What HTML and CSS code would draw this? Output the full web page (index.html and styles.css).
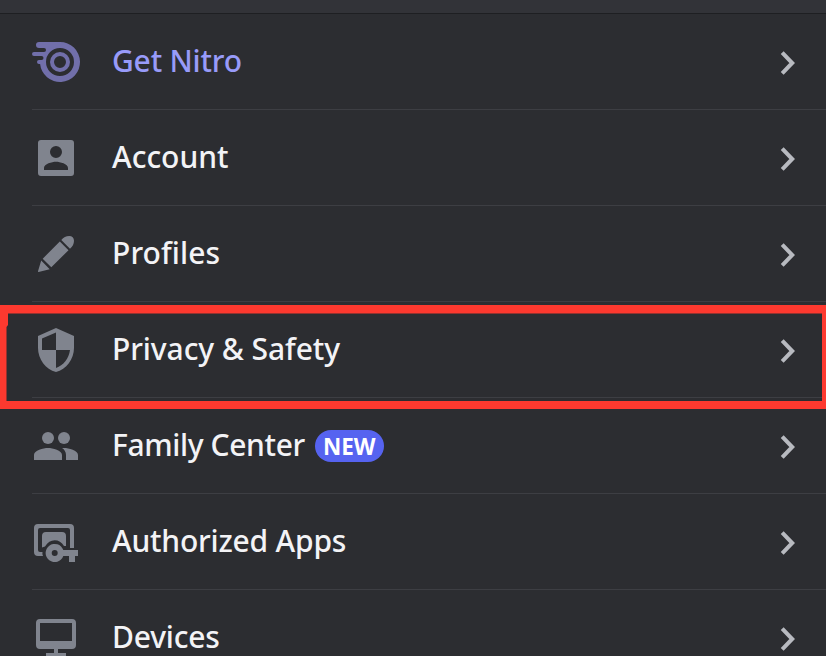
FILE: index.html
```html
<!DOCTYPE html>
<html lang="en">
<head>
<meta charset="utf-8">
<title>User Settings</title>
<link rel="stylesheet" href="styles.css">
</head>
<body>
<svg class="defs" width="0" height="0" aria-hidden="true">
  <symbol id="chevron" viewBox="0 0 20 28"><path d="M4.200 3.700 14.200 14 4.200 24.300" fill="none" stroke="currentColor" stroke-width="4"/></symbol>
</svg>
<div class="top-strip"></div>
<main class="settings">
  <a class="row nitro">
    <svg class="icon" viewBox="0 0 48 48"><path fill-rule="evenodd" d="M7 4H28A20 20 0 1 1 8.100 26H7a2 2 0 0 1 0-4H9.500A2 2 0 0 0 9.500 18H2a2 2 0 0 1 0-4H12a2 2 0 0 0 0-4H7a3 3 0 0 1 0-6ZM28 10a14 14 0 1 0 0 28a14 14 0 1 0 0-28Z"/><circle cx="28" cy="24" r="8" fill="none" stroke="currentColor" stroke-width="4"/></svg>
    <span class="label get-nitro">Get Nitro</span>
    <svg class="chevron"><use href="#chevron"/></svg>
  </a>
  <a class="row">
    <svg class="icon" viewBox="0 0 24 24"><path fill-rule="evenodd" d="M4.500 3h15A1.500 1.500 0 0 1 21 4.500v15a1.500 1.500 0 0 1-1.500 1.500h-15A1.500 1.500 0 0 1 3 19.500v-15A1.500 1.500 0 0 1 4.500 3ZM12 6a3 3 0 1 0 0 6a3 3 0 1 0 0-6ZM6 18h12v-1c0-2-4-3.100-6-3.100S6 15 6 17Z"/></svg>
    <span class="label account">Account</span>
    <svg class="chevron"><use href="#chevron"/></svg>
  </a>
  <a class="row">
    <svg class="icon" viewBox="0 0 48 48"><path d="M27.800 11.500 36.500 20.200 19.300 37.300 10.700 28.700ZM29.300 10C31.500 7.500 34 6 37.300 6c2.700 0 4.700 2 4.700 4.700 0 3.300-1.500 5.800-4 8ZM9.200 30.500 17.700 39.300 6.600 42Q5.800 42 6 41.300Z"/></svg>
    <span class="label profiles">Profiles</span>
    <svg class="chevron"><use href="#chevron"/></svg>
  </a>
  <a class="row selected">
    <svg class="icon" viewBox="0 0 24 24"><path fill-rule="evenodd" d="M12 1 3 5v6c0 5.550 3.840 10.740 9 12 5.160-1.260 9-6.450 9-12V5ZM12 12h7c-.53 4.120-3.280 7.790-7 8.940V12H5V6.300l7-3.110Z"/></svg>
    <span class="label privacy">Privacy &amp; Safety</span>
    <svg class="chevron"><use href="#chevron"/></svg>
    <svg class="highlight" viewBox="0 0 826 104"><path fill-rule="evenodd" d="M0 0H826V104H0ZM8 8.500V20L6.500 22V96H822V8.500Z"/></svg>
  </a>
  <a class="row">
    <svg class="icon" viewBox="0 0 24 24"><circle cx="8" cy="8" r="3"/><circle cx="16" cy="8" r="3"/><path d="M8 13c-2.330 0-7 1.170-7 3.500V19h14v-2.500C15 14.170 10.330 13 8 13ZM16 13c-.29 0-.62.02-.97.05 1.160.84 1.970 1.970 1.970 3.450V19h6v-2.500c0-2.330-4.670-3.500-7-3.500Z"/></svg>
    <span class="label family">Family Center</span><span class="badge">NEW</span>
    <svg class="chevron"><use href="#chevron"/></svg>
  </a>
  <a class="row">
    <svg class="icon" viewBox="0 0 48 48"><path d="M6 6H38a4 4 0 0 1 4 4V30H38V12a2 2 0 0 0-2-2H8a2 2 0 0 0-2 2V32a2 2 0 0 0 2 2H10.500Q10 36 11 38H6a4 4 0 0 1-4-4V10a4 4 0 0 1 4-4ZM14 14H30a4 4 0 0 1 4 4V28H32Q28.500 22.300 22.700 22.300T13 28.500L10 29.500V18a4 4 0 0 1 4-4Z"/><path fill-rule="evenodd" d="M31.300 32H46V38H43V44H37V38H31.300A9.100 9.100 0 1 1 31.300 32ZM22.700 32a3 3 0 1 0 0 6a3 3 0 1 0 0-6Z"/></svg>
    <span class="label apps">Authorized Apps</span>
    <svg class="chevron"><use href="#chevron"/></svg>
  </a>
  <a class="row">
    <svg class="icon" viewBox="0 0 48 48"><path fill-rule="evenodd" d="M8 5H40a4 4 0 0 1 4 4V31a4 4 0 0 1-4 4H26V39H34V43H14V39H22V35H8a4 4 0 0 1-4-4V9a4 4 0 0 1 4-4ZM8 9V27H40V9Z"/></svg>
    <span class="label devices">Devices</span>
    <svg class="chevron"><use href="#chevron"/></svg>
  </a>
</main>
</body>
</html>
```
FILE: styles.css
```css
* { box-sizing: border-box; }
html { overflow: hidden; }
body {
  margin: 0;
  height: 656px;
  overflow: hidden;
  background: #2c2d31;
  color: #f3f3f6;
  font-family: "Noto Sans", sans-serif;
}
.defs { position: absolute; }
.top-strip {
  height: 14px;
  background: #323338;
  border-bottom: 1px solid #1e1f22;
}
.row {
  position: relative;
  display: flex;
  align-items: center;
  height: 96px;
  padding: 0 28px 0 32px;
  background: linear-gradient(#3d3e43, #3d3e43) 32px 100% / 100% 1px no-repeat;
}
.icon {
  flex: none;
  width: 48px;
  height: 48px;
  margin-right: 32px;
  color: #80848e;
  fill: currentColor;
}
.label {
  margin-bottom: 2px;
  font-size: 30px;
  font-weight: 500;
  line-height: 34px;
  white-space: nowrap;
}
.get-nitro { letter-spacing: -0.2px; }
.profiles { letter-spacing: 0.1px; }
.privacy { letter-spacing: -0.08px; }
.family { letter-spacing: -0.38px; }
.apps { letter-spacing: -0.2px; }
.devices { letter-spacing: -0.2px; }
.nitro .icon { color: #716faa; }
.nitro .label { color: #989bf9; }
.chevron {
  flex: none;
  width: 20px;
  height: 28px;
  margin-left: auto;
  color: #b8bac0;
  position: relative;
  top: 0.5px;
}
.badge {
  width: 69px;
  height: 32px;
  margin-left: 10px;
  border-radius: 16px;
  background: #5663f0;
  color: #fff;
  font-size: 22.5px;
  font-weight: 700;
  line-height: 33px;
  text-align: center;
}
.highlight {
  position: absolute;
  z-index: 1;
  left: 0;
  top: 3px;
  width: 826px;
  height: 104px;
  fill: #fd392f;
}
```
